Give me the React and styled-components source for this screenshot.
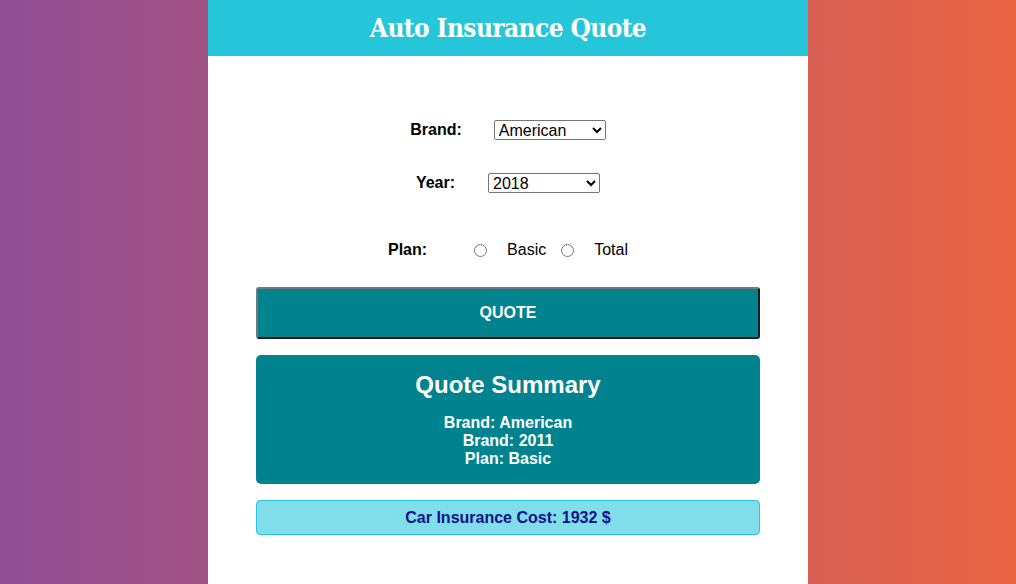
import styled, { createGlobalStyle } from "styled-components";

const GlobalStyle = createGlobalStyle`
  html, body {
    margin: 0;
    padding: 0;
    height: 100%;
  }
  body {
    background: linear-gradient(to right, #904e95, #e96443);
    font-family: "Liberation Sans", Arial, sans-serif;
    min-height: 584px;
  }
`;

const App = () => {
  return (
    <>
      <GlobalStyle />
      <Container>
        <Header>
          <Title>Auto Insurance Quote</Title>
        </Header>
        <Content>
          <Form>
            <Field gap="32px">
              <Label>Brand:</Label>
              <Select defaultValue="American">
                <option>American</option>
                <option>European</option>
                <option>Asian</option>
              </Select>
            </Field>
            <Field gap="33px" spacing="47px">
              <Label>Year:</Label>
              <Select defaultValue="2018">
                <option>2018</option>
                <option>2017</option>
                <option>2011</option>
              </Select>
            </Field>
            <Field gap="47px" spacing="27px">
              <Label>Plan:</Label>
              <Radio type="radio" name="plan" value="basic" />
              <RadioText>Basic</RadioText>
              <Radio type="radio" name="plan" value="total" />
              <RadioText>Total</RadioText>
            </Field>
            <Button type="button">QUOTE</Button>
          </Form>
          <Summary>
            <h2>Quote Summary</h2>
            <p>Brand: American</p>
            <p>Brand: 2011</p>
            <p>Plan: Basic</p>
          </Summary>
          <Result>Car Insurance Cost: 1932 $</Result>
        </Content>
      </Container>
    </>
  );
};

const Container = styled.div`
  width: 600px;
  min-height: 584px;
  margin: 0 auto;
  background-color: white;
`;

const Header = styled.header`
  height: 56px;
  background-color: #26c6da;
  display: flex;
  align-items: center;
  justify-content: center;
`;

const Title = styled.h1`
  margin: 0;
  color: white;
  font-family: "DejaVu Serif Condensed", "DejaVu Serif", serif;
  font-weight: bold;
  font-size: 26px;
  letter-spacing: -0.6px;
`;

const Content = styled.main`
  padding: 64px 48px 48px;
`;

const Form = styled.form`
  display: flex;
  flex-direction: column;
`;

const Field = styled.div`
  display: flex;
  align-items: center;
  justify-content: center;
  height: 20px;
  margin-bottom: ${(p) => p.spacing || "33px"};

  & > label {
    margin-right: ${(p) => p.gap};
  }
`;

const Label = styled.label`
  font-weight: bold;
  font-size: 16px;
  color: #000;
`;

const Select = styled.select`
  font-family: "Liberation Sans", Arial, sans-serif;
  font-size: 16px;
  height: 20px;
  width: 112px;
  padding: 0;
`;

const Radio = styled.input`
  margin: 0 20px 0 0;
  width: 13px;
  height: 13px;
`;

const RadioText = styled.span`
  font-size: 16px;
  color: #000;
  margin-right: 15px;

  &:last-child {
    margin-right: 0;
  }
`;

const Button = styled.button`
  height: 52px;
  width: 100%;
  background-color: #00838f;
  color: white;
  font-family: "Liberation Sans", Arial, sans-serif;
  font-weight: bold;
  font-size: 16px;
  text-transform: uppercase;
  border-width: 2px;
  border-style: solid;
  border-color: #767676 #1a1a1a #1a1a1a #767676;
  border-radius: 3px;
  margin-bottom: 16px;
`;

const Summary = styled.div`
  background-color: #00838f;
  color: white;
  border-radius: 5px;
  padding: 16px 0 16px;
  text-align: center;
  margin-bottom: 16px;

  & h2 {
    margin: 0 0 15px;
    font-size: 24px;
    line-height: 28px;
  }

  & p {
    margin: 0;
    font-weight: bold;
    font-size: 16px;
    line-height: 18px;
  }
`;

const Result = styled.p`
  margin: 0;
  height: 35px;
  box-sizing: border-box;
  background-color: #80deea;
  border: 1px solid #26c6da;
  border-radius: 4px;
  color: #10108c;
  font-weight: bold;
  font-size: 16px;
  display: flex;
  align-items: center;
  justify-content: center;
`;

export default App;
